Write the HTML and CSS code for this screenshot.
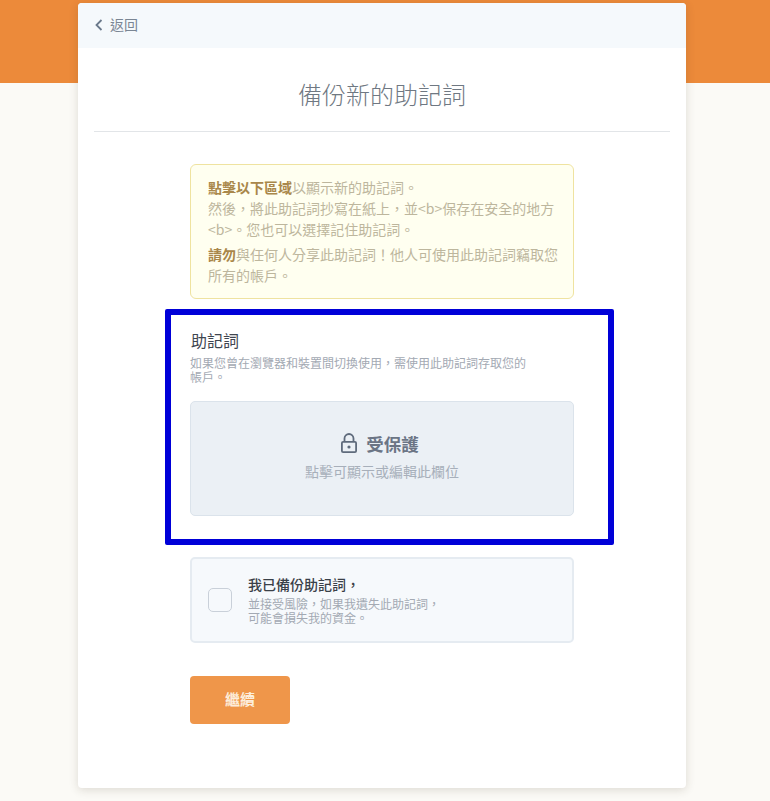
FILE: index.html
```html
<!DOCTYPE html>
<html lang="zh-TW">
<head>
<meta charset="utf-8">
<title>備份新的助記詞</title>
<link rel="stylesheet" href="styles.css">
</head>
<body>
<div class="banner"></div>
<main class="card">
  <header class="back">
    <svg class="chev" viewBox="0 0 10 14" width="10" height="14"><path d="M7.5 2 L2.5 7 L7.5 12" fill="none" stroke="#6b7a8c" stroke-width="1.8"/></svg>
    <span>返回</span>
  </header>
  <h1 class="title">備份新的助記詞</h1>
  <div class="content">
    <div class="notice">
      <p><b>點擊以下區域</b><span>以顯示新的助記詞。</span><br>然後，將此助記詞抄寫在紙上，並&lt;b&gt;保存在安全的地方&lt;b&gt;。您也可以選擇記住助記詞。</p>
      <p><b>請勿</b><span>與任何人分享此助記詞！他人可使用此助記詞竊取您所有的帳戶。</span></p>
    </div>
    <section class="phrase">
      <div class="highlight"></div>
      <h2>助記詞</h2>
      <p class="hint">如果您曾在瀏覽器和裝置間切換使用，需使用此助記詞存取您的帳戶。</p>
      <div class="protected">
        <div class="prot-title">
          <svg viewBox="0 0 18 22" width="18" height="22"><path d="M4.5 10V6.5a4.5 4.5 0 0 1 9 0V10" fill="none" stroke="#5f6b7c" stroke-width="1.8"/><rect x="1.9" y="9.9" width="14.2" height="10.2" rx="1.2" fill="none" stroke="#5f6b7c" stroke-width="1.8"/><circle cx="9" cy="15" r="1.6" fill="#5f6b7c"/></svg>
          <span>受保護</span>
        </div>
        <div class="prot-sub">點擊可顯示或編輯此欄位</div>
      </div>
    </section>
    <label class="confirm">
      <span class="box"></span>
      <span class="confirm-text">
        <strong>我已備份助記詞，</strong>
        <small>並接受風險，如果我遺失此助記詞，<br>可能會損失我的資金。</small>
      </span>
    </label>
    <button class="continue" type="button">繼續</button>
  </div>
</main>
</body>
</html>
```
FILE: styles.css
```css
* { box-sizing: border-box; }
html, body { margin: 0; padding: 0; }
body {
  height: 801px;
  overflow: hidden;
  background: #fbfaf6;
  font-family: "Noto Sans CJK TC", "Noto Sans CJK JP", sans-serif;
  font-feature-settings: "locl" 1;
  position: relative;
}
.banner {
  position: absolute;
  top: 0; left: 0; right: 0;
  height: 83px;
  background: #ec8a3a;
}
.card {
  position: relative;
  width: 608px;
  height: 785px;
  margin: 3px 0 0 78px;
  background: #fff;
  border-radius: 4px;
  box-shadow: 0 2px 10px rgba(60, 50, 30, .16);
  overflow: hidden;
}
.back {
  height: 45px;
  background: #f5f9fc;
  display: flex;
  align-items: center;
  gap: 6px;
  padding: 0 0 1px 16px;
  font-size: 14px;
  line-height: 20px;
  color: #7a8694;
}
.back span { position: relative; top: -1px; }
.title {
  margin: 0 16px;
  height: 84px;
  padding-top: 28px;
  border-bottom: 1px solid #e2e5e8;
  text-align: center;
  font-size: 24px;
  line-height: 36px;
  font-weight: 300;
  color: #6f7882;
}
.content {
  width: 384px;
  margin: 32px 0 0 112px;
}
.notice {
  height: 135px;
  padding: 12px 15px 0 17px;
  background: #fffff0;
  border: 1px solid #efe3a0;
  border-radius: 6px;
  font-size: 14px;
  line-height: 21px;
  color: #bdb69d;
}
.notice p { margin: 0 0 4px; }
.notice b { color: #a9874a; font-weight: 700; }
.phrase {
  position: relative;
  padding-top: 30px;
}
.highlight {
  position: absolute;
  left: -25px;
  top: 10px;
  width: 449px;
  height: 236px;
  border: 6px solid #0000d8;
  border-radius: 2px;
}
.phrase h2 {
  margin: 0 0 0 1px;
  font-size: 16px;
  line-height: 22px;
  font-weight: 400;
  color: #3f4650;
}
.hint {
  margin: 5px 0 0;
  width: 340px;
  font-size: 12px;
  line-height: 14px;
  color: #a3a9b3;
}
.protected {
  height: 115px;
  margin-top: 17px;
  background: #ebf0f5;
  border: 1px solid #dbe3eb;
  border-radius: 5px;
  text-align: center;
  padding-top: 28px;
}
.prot-title {
  display: flex;
  justify-content: center;
  align-items: center;
  gap: 8px;
  height: 26px;
  padding-right: 5px;
  font-size: 17.5px;
  font-weight: 700;
  color: #6b7585;
}
.prot-sub {
  margin-top: 6px;
  font-size: 14px;
  line-height: 18px;
  color: #a7afba;
}
.confirm {
  display: flex;
  align-items: center;
  height: 86px;
  margin-top: 41px;
  padding-left: 16px;
  gap: 16px;
  background: #f6f9fc;
  border: 2px solid #e5ebf1;
  border-radius: 5px;
}
.box {
  width: 24px;
  height: 24px;
  background: #f6f9fc;
  border: 1px solid #c9d0d9;
  border-radius: 5px;
}
.confirm-text { display: flex; flex-direction: column; padding-bottom: 2px; }
.confirm strong {
  font-size: 14px;
  line-height: 20px;
  font-weight: 500;
  color: #3a4048;
}
.confirm small {
  margin-top: 3px;
  font-size: 12px;
  line-height: 14px;
  color: #a3a9b3;
}
.continue {
  display: block;
  width: 100px;
  height: 48px;
  margin-top: 33px;
  padding: 0 0 3px;
  border: 0;
  border-radius: 4px;
  background: #ef964a;
  color: #fdeedd;
  font: 700 15px "Noto Sans CJK TC", sans-serif;
}
```
